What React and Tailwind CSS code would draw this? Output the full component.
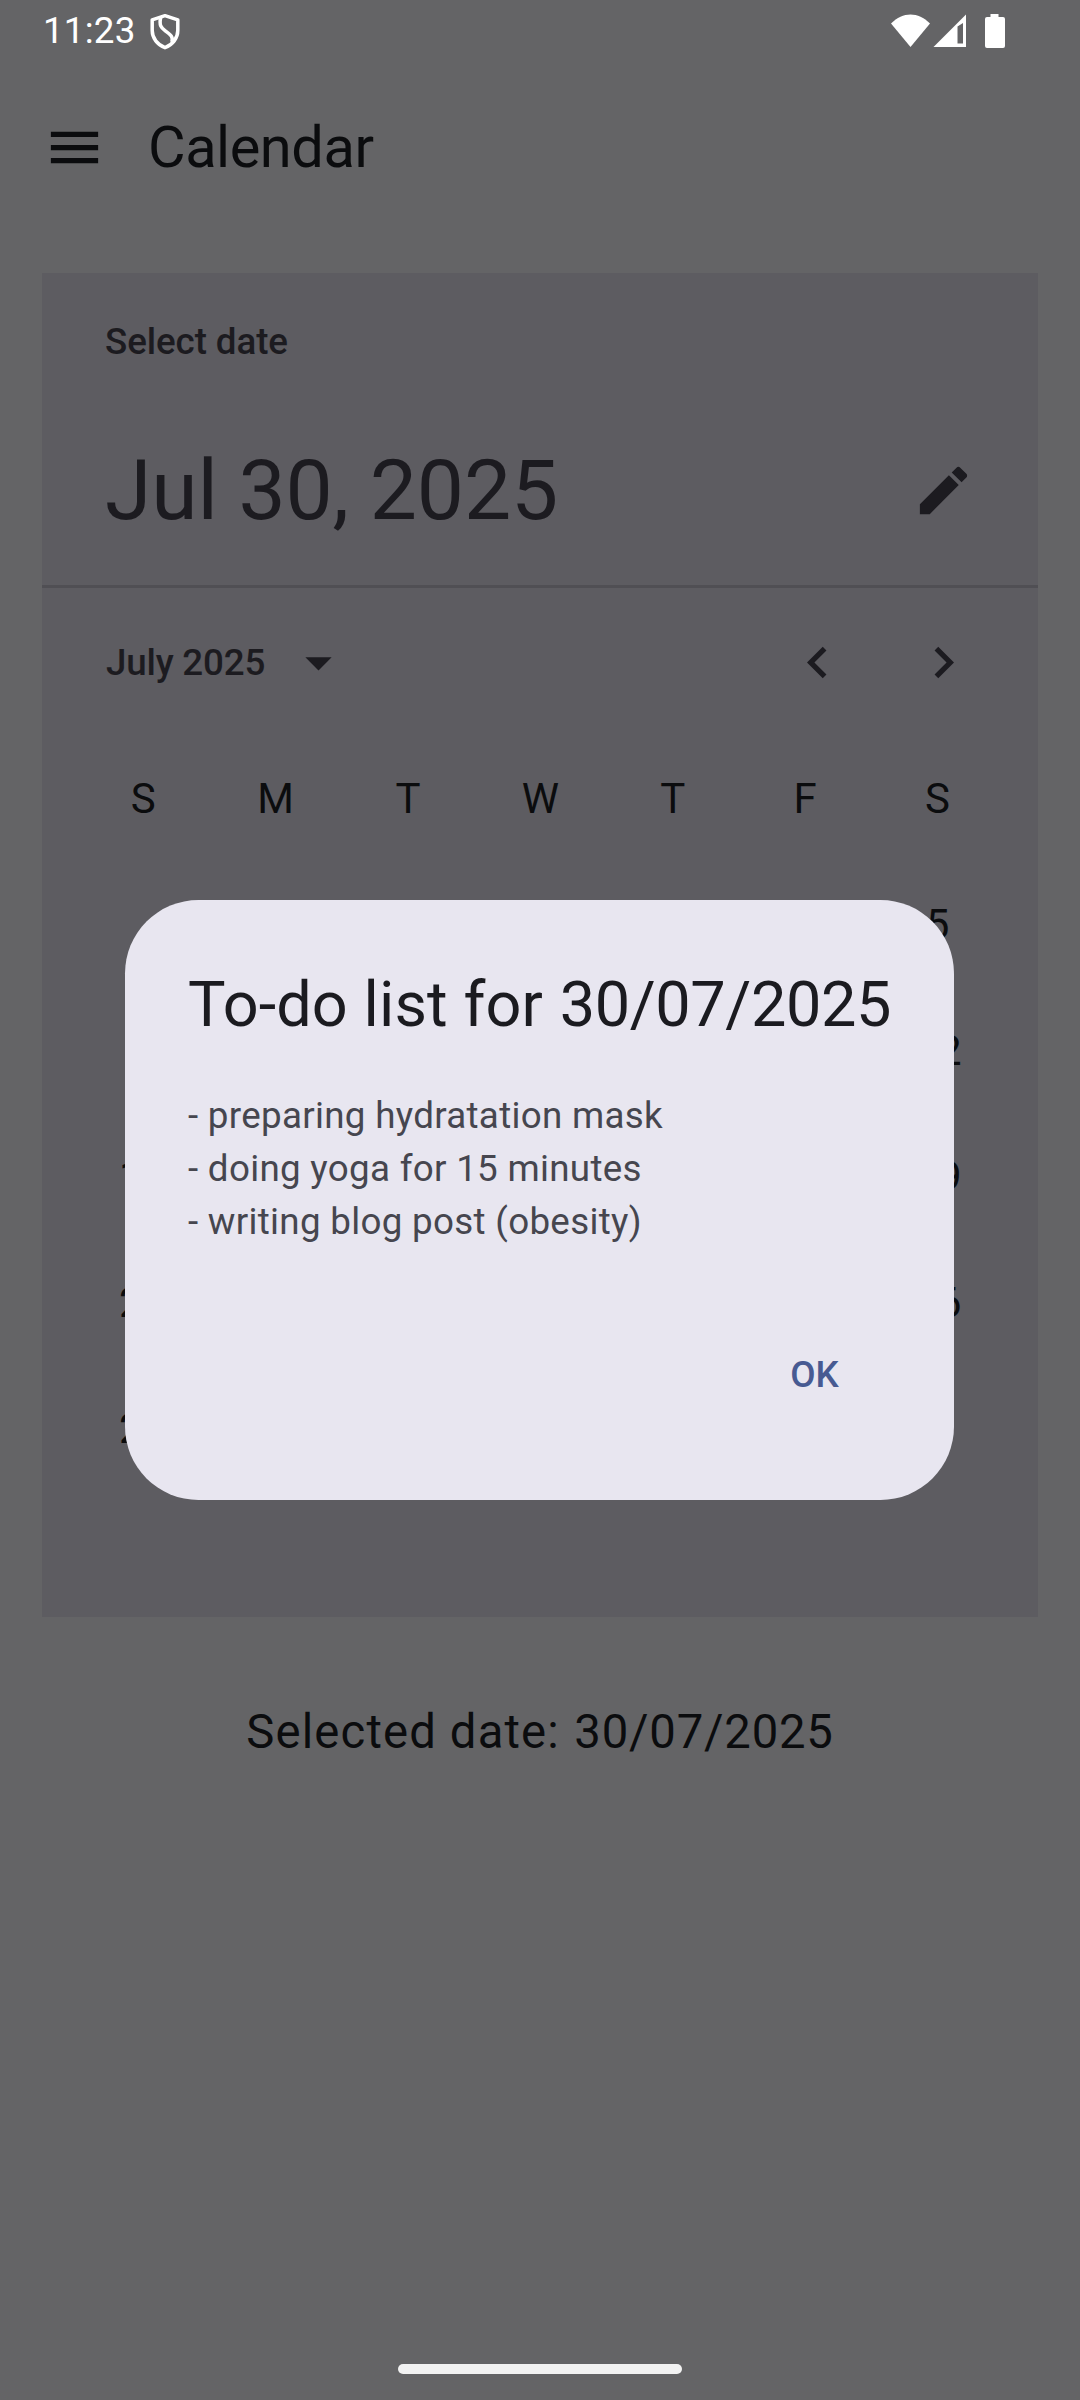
import React from "react";

const weekdays = ["S", "M", "T", "W", "T", "F", "S"];

const weeks = [
  ["", "", "1", "2", "3", "4", "5"],
  ["6", "7", "8", "9", "10", "11", "12"],
  ["13", "14", "15", "16", "17", "18", "19"],
  ["20", "21", "22", "23", "24", "25", "26"],
  ["27", "28", "29", "30", "31", "", ""],
];

const tasks = [
  "- preparing hydratation mask",
  "- doing yoga for 15 minutes",
  "- writing blog post (obesity)",
];

function Icon({ d, className }) {
  return (
    <svg viewBox="0 0 24 24" className={className} fill="currentColor">
      <path d={d} />
    </svg>
  );
}

function StatusBar() {
  return (
    <div className="flex h-[63px] shrink-0 items-start text-white">
      <span className="ml-[43px] mt-[9px] w-[95px] text-[36.75px] leading-[44px] tracking-[0.2px]">11:23</span>
      <svg
        viewBox="0 0 30 36"
        className="ml-[12px] mt-[14px] h-[36px] w-[30px]"
        fill="none"
        stroke="currentColor"
        strokeWidth="3.5"
        strokeLinejoin="round"
      >
        <path d="M15 1.700 2.200 5.800v10.700c0 7.600 5.200 14.300 12.800 17.200 7.600-2.900 12.800-9.600 12.800-17.200V5.800Z" />
        <path d="M10.800 3c-2 8.500.5 10.800 4.500 13.800 5.500 4 8.200 6 6.500 11.200" />
      </svg>
      <svg viewBox="0 0 116 36" className="ml-auto mr-[74px] mt-[13px] h-[36px] w-[116px]" fill="currentColor">
        <path d="M1 10.500C13 -1.500 28 -1.500 40 10.500L20.500 34Z" />
        <path fillRule="evenodd" d="M43.500 34 76 1.500V34ZM67.500 13.500V30.500H73V10Z" />
        <path d="M100.500 1h8v3h4.500a2 2 0 0 1 2 2v27a2 2 0 0 1-2 2H97a2 2 0 0 1-2-2V6a2 2 0 0 1 2-2h3.500z" />
      </svg>
    </div>
  );
}

function DatePicker() {
  return (
    <section className="mx-[42px] mt-[42px] flex h-[1344px] flex-col bg-[#5d5c61] text-[#1c1b20]">
      <div className="flex h-[312px] shrink-0 flex-col px-[63px] pt-[43px]">
        <span className="text-[36.75px] font-medium leading-[52px] tracking-[-0.1px]">Select date</span>
        <div className="mt-[70px] flex items-center justify-between">
          <span className="text-[84px] leading-[105px] tracking-[-0.12px]">Jul 30, 2025</span>
          <Icon
            className="h-[63px] w-[63px]"
            d="M3 17.250V21h3.750L17.810 9.940l-3.750-3.750L3 17.250zM20.710 7.040c.390-.390.390-1.020 0-1.410l-2.340-2.340c-.390-.390-1.020-.390-1.410 0l-1.830 1.830 3.750 3.750 1.830-1.830z"
          />
        </div>
      </div>
      <div className="h-[3px] shrink-0 bg-[#504f54]" />
      <div className="flex h-[147px] shrink-0 items-center px-[63px] pt-[2px]">
        <span className="w-[162px] whitespace-nowrap pl-[1px] text-[36.75px] font-medium leading-[52px] tracking-[-0.2px]">
          July 2025
        </span>
        <Icon className="ml-[20px] h-[63px] w-[63px]" d="M7 10l5 5 5-5z" />
        <Icon
          className="ml-auto h-[63px] w-[63px]"
          d="M15.410 7.410 14 6l-6 6 6 6 1.410-1.410L10.830 12z"
        />
        <Icon
          className="ml-[63px] h-[63px] w-[63px]"
          d="M10 6 8.590 7.410 13.170 12l-4.580 4.590L10 18l6-6z"
        />
      </div>
      <div className="flex flex-col pl-[32.5px] pr-[30.5px] text-[42px] tracking-[1.3px] text-[#0b0c0e]">
        <div className="flex h-[126px] items-center justify-evenly">
          {weekdays.map((day, i) => (
            <span key={i} className="w-[126px] text-center">
              {day}
            </span>
          ))}
        </div>
        {weeks.map((week, row) => (
          <div key={row} className="flex h-[126px] items-center justify-evenly">
            {week.map((day, i) => (
              <span key={i} className="w-[126px] text-center">
                {day}
              </span>
            ))}
          </div>
        ))}
      </div>
    </section>
  );
}

function TodoDialog() {
  return (
    <div
      role="dialog"
      className="absolute left-[125px] top-[900px] flex h-[600px] w-[829px] flex-col rounded-[73.5px] bg-[#e8e6f0] p-[63px]"
    >
      <h2 className="whitespace-nowrap text-[63px] leading-[84px] tracking-[0.1px] text-[#1b1b20]">
        To-do list for <span className="ml-[1px] tracking-[-0.4px]">30/07/2025</span>
      </h2>
      <div className="mt-[42px] text-[36.75px] leading-[53px] tracking-[0.3px] text-[#46464f]">
        {tasks.map((task) => (
          <p key={task}>{task}</p>
        ))}
      </div>
      <button className="ml-auto mr-[21px] mt-[74px] h-[105px] px-[31.5px] text-[36.75px] font-medium tracking-[-0.1px] text-[#475a92]">
        OK
      </button>
    </div>
  );
}

export default function App() {
  return (
    <main className="relative flex h-[2400px] w-[1080px] flex-col overflow-hidden bg-[#646466] font-['Roboto',sans-serif]">
      <StatusBar />
      <header className="flex h-[168px] shrink-0 items-center pl-[43px] text-[#0b0c0e]">
        <Icon className="h-[63px] w-[63px]" d="M3 18h18v-2H3v2zm0-5h18v-2H3v2zm0-7v2h18V6H3z" />
        <h1 className="ml-[42px] text-[57.75px] leading-[74px] tracking-[-0.45px]">Calendar</h1>
      </header>
      <DatePicker />
      <p className="mt-[84px] text-center text-[47.25px] leading-[63px] tracking-[1.15px] text-[#0b0c0e]">
        Selected date: <span className="ml-[1.5px] tracking-[0.8px]">30/07/2025</span>
      </p>
      <div className="mx-auto mb-[26px] mt-auto h-[10px] w-[284px] rounded-full bg-[#f2f2f2]" />
      <TodoDialog />
    </main>
  );
}
